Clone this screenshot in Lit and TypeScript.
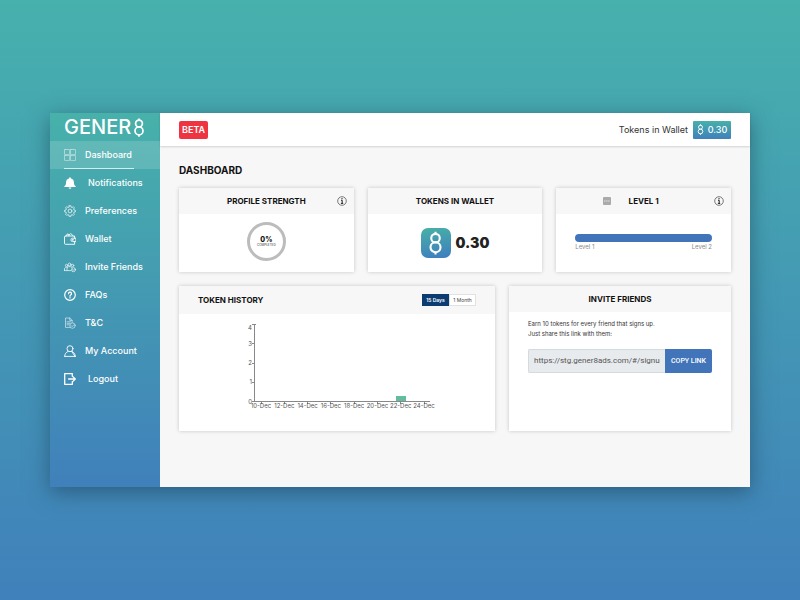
import { LitElement, html, svg, css } from "lit";
import { customElement, state } from "lit/decorators.js";
import { classMap } from "lit/directives/class-map.js";

const icons = {
  dashboard: svg`<g opacity=".65" stroke-width=".7"><rect x=".5" y=".5" width="5.2" height="5.2" rx=".5"/><rect x="6.400" y=".5" width="5.2" height="5.2" rx=".5"/><rect x=".5" y="6.400" width="5.2" height="5.2" rx=".5"/><rect x="6.400" y="6.400" width="5.2" height="5.2" rx=".5"/></g>`,
  bell: svg`<path fill="#fff" stroke="none" d="M6 .3c.5 0 .9.4.9.9v.3c1.900.4 3 1.800 3 3.500 0 2.600.6 3.500 1.800 4.300v.8H.3v-.8c1.200-.8 1.800-1.700 1.800-4.300 0-1.700 1.100-3.100 3-3.500v-.3c0-.5.400-.9.900-.9z M4.600 10.600h2.800a1.400 1.200 0 0 1-2.800 0z"/>`,
  gear: svg`<g stroke-width=".8" opacity=".9"><circle cx="6" cy="6" r="1.900"/><path d="M5.200.7h1.600l.3 1.400 1 .4 1.200-.8 1.100 1.100-.8 1.200.4 1 1.400.3v1.500l-1.400.3-.4 1 .8 1.200-1.100 1.100-1.200-.8-1 .4-.3 1.400H5.200l-.3-1.400-1-.4-1.200.8-1.100-1.100.8-1.200-.4-1L.6 6.800V5.300L2 5l.4-1-.8-1.200 1.100-1.100 1.200.8 1-.4z"/></g>`,
  wallet: svg`<path d="M1.500 3h9.100v2.200M10.600 8.600v2.700H1.500a1 1 0 0 1-1-1V4a1 1 0 0 1 1-1M2.600 2.800l.6-1.900 2.300.9M4.400 2.800L6.800.5l2.300 2.300M11.500 5.200H8.600a1.700 1.700 0 0 0 0 3.400h2.900z" stroke-width=".9"/><circle cx="8.700" cy="6.900" r=".4"/>`,
  friends: svg`<g stroke-width=".8" opacity=".85"><circle cx="2.600" cy="4.500" r="1.200"/><circle cx="5.600" cy="3.500" r="1.400"/><circle cx="8.600" cy="4.500" r="1.200"/><path d="M.5 9.500V8a2 2 0 0 1 2.700-1.800M3 9.600V8a2.600 2.600 0 0 1 4.600-1.600M.5 9.600h6.400"/><circle cx="9.500" cy="8.700" r="2"/><path d="M8.600 8.700l.7.700 1.200-1.300"/></g>`,
  faq: svg`<circle cx="6" cy="6" r="5.300" stroke-width="1.200"/><path d="M4.500 4.700a1.500 1.500 0 1 1 2.200 1.300c-.6.3-.7.600-.7 1.200M6 8.600v.3" stroke-width="1.300"/>`,
  terms: svg`<g stroke-width=".7" opacity=".8"><path d="M6 10.400H1.500V1h4.300l2.300 2.300v2M5.700 1v2.400h2.400M3 4.800h3.500M3 6.300h2.800M3 7.800h2.200"/><circle cx="8.500" cy="8.600" r="2.700"/><path d="M7.200 8.600l1 1 1.700-1.900"/></g>`,
  account: svg`<g stroke-width=".9"><circle cx="6" cy="3.700" r="3"/><path d="M.7 11.400c0-2.600 1.400-4.200 3.400-5M7.900 6.400c2 .8 3.400 2.400 3.400 5zM.7 11.400h10.600"/></g>`,
  logout: svg`<path d="M8.300 3.300V.7H.7v10.600h7.600V8.700M4.600 6h6.700M9.200 3.900L11.300 6 9.200 8.100" stroke-width="1.300"/>`,
};

const eight = svg`<circle cx="6" cy="5.600" r="3.400"/><circle cx="6" cy="12.900" r="4"/><path d="M6 .5v2M6 16.700v2"/>`;

const nav = [
  { id: "dashboard", label: "Dashboard", icon: icons.dashboard, wide: false },
  { id: "notifications", label: "Notifications", icon: icons.bell, wide: true },
  { id: "preferences", label: "Preferences", icon: icons.gear, wide: false },
  { id: "wallet", label: "Wallet", icon: icons.wallet, wide: false },
  { id: "invite", label: "Invite Friends", icon: icons.friends, wide: false },
  { id: "faqs", label: "FAQs", icon: icons.faq, wide: false },
  { id: "terms", label: "T&C", icon: icons.terms, wide: false },
  { id: "account", label: "My Account", icon: icons.account, wide: false },
  { id: "logout", label: "Logout", icon: icons.logout, wide: true },
];

const days = ["10-Dec", "12-Dec", "14-Dec", "16-Dec", "18-Dec", "20-Dec", "22-Dec", "24-Dec"];
const levels = [0, 1, 2, 3, 4];

@customElement("token-chart")
export class TokenChart extends LitElement {
  static styles = css`
    :host { display: block; }
    svg { display: block; overflow: visible; }
    .axis { fill: none; stroke: #888; stroke-width: 1; shape-rendering: crispEdges; }
    .bar { fill: #62bd9d; }
    text { font: 6px Inter, "Open Sans", sans-serif; fill: #555; }
    .day { text-anchor: middle; }
    .level { text-anchor: end; }
  `;

  render() {
    const x = (i: number) => 24 + (i * 163) / 7;
    const y = (v: number) => 87.5 - v * 19.250;
    return html`<svg width="200" height="100" viewBox="0 0 200 100" role="img" aria-label="Tokens per day">
      <rect class="bar" x="159" y="82" width="10" height="5"></rect>
      <path class="axis" d="M15 10.500H18.500M17.500 10.500V87.500H193"></path>
      ${levels.map((v) => svg`<path class="axis" d="M15 ${y(v)}h3"/><text class="level" x="15" y=${v === 4 ? 16 : y(v) + 2}>${v}</text>`)}
      ${days.map((d, i) => svg`<path class="axis" d="M${x(i)} 87v3"/><text class="day" x=${x(i)} y="94">${d}</text>`)}
    </svg>`;
  }
}

@customElement("app-root")
export class AppRoot extends LitElement {
  @state() private range = 15;

  static styles = css`
    :host {
      display: flex;
      box-sizing: border-box;
      min-height: 100vh;
      padding: 113px 50px;
      background: linear-gradient(#47b1ad, #4080bb);
      font: 9px/12px Inter, "Open Sans", sans-serif;
      color: #222;
    }
    * { box-sizing: border-box; }
    h1, h2, p { margin: 0; }
    button, input { font: inherit; }
    button { cursor: pointer; }
    svg { display: block; flex: none; }
    .window {
      flex: 1;
      display: flex;
      min-width: 0;
      background: #f7f7f7;
      box-shadow: 0 5px 20px rgba(20, 50, 70, 0.5);
    }
    .sidebar {
      flex: none;
      width: 110px;
      background: linear-gradient(#47b1aa, #4080bb);
      color: #fff;
    }
    .logo {
      display: flex;
      align-items: center;
      gap: 2px;
      height: 28px;
      padding: 0 14px;
      font-size: 20px;
      line-height: 28px;
      font-weight: 500;
      color: #fff;
      text-decoration: none;
    }
    .stroke { fill: none; stroke: #fff; stroke-width: 1; stroke-linecap: round; stroke-linejoin: round; }
    .mark { fill: none; stroke: #fff; stroke-width: 1.700; }
    .item {
      position: relative;
      display: flex;
      align-items: center;
      gap: 9px;
      height: 28px;
      padding: 0 14px;
      font-weight: 500;
      color: #fff;
      text-decoration: none;
      white-space: nowrap;
    }
    .item.wide { gap: 12px; }
    .item.active { background: rgba(255, 255, 255, 0.15); }
    .item.active::after {
      content: "";
      position: absolute;
      left: 14px;
      right: 26px;
      bottom: 0;
      height: 1px;
      background: rgba(255, 255, 255, 0.75);
    }
    .content { flex: 1; min-width: 0; }
    .topbar {
      display: flex;
      align-items: center;
      justify-content: space-between;
      height: 33px;
      padding: 0 19px;
      background: #fff;
      box-shadow: 0 1px 2px rgba(0, 0, 0, 0.15);
    }
    .beta {
      padding: 0 3px;
      border-radius: 2px;
      background: #ee3440;
      color: #fff;
      font-weight: 600;
      line-height: 18px;
    }
    .balance { display: flex; align-items: center; gap: 5px; color: #333; }
    .chip {
      display: flex;
      align-items: center;
      justify-content: center;
      gap: 4px;
      width: 38px;
      height: 18px;
      border-radius: 1px;
      background: linear-gradient(#47b1aa, #4080bb);
      color: #fff;
      font-weight: 500;
    }
    .page { padding: 18px 19px 0; }
    h1 { font-size: 10px; line-height: 12px; font-weight: 700; color: #111; }
    .row { display: grid; gap: 14px; }
    .stats { grid-template-columns: repeat(3, minmax(0, 1fr)); margin-top: 12px; }
    .details { grid-template-columns: minmax(0, 316fr) minmax(0, 222fr); margin-top: 14px; }
    .card {
      display: flex;
      flex-direction: column;
      min-height: 84px;
      background: #fff;
      box-shadow: 0 0 4px rgba(0, 0, 0, 0.2);
    }
    .details .card { min-height: 145px; }
    .head {
      display: grid;
      grid-template-columns: 1fr auto 1fr;
      align-items: center;
      height: 26px;
      padding: 0 7px;
      background: #f7f7f7;
    }
    .head.split { display: flex; justify-content: space-between; height: 28px; padding: 0 19px; }
    h2 { grid-column: 2; font-size: 8px; line-height: 12px; font-weight: 700; color: #111; }
    .info { justify-self: end; padding: 0; border: 0; background: none; }
    .badge { justify-self: end; margin-right: 18px; }
    .body { flex: 1; display: flex; align-items: center; justify-content: center; }
    .body.chart { align-items: flex-start; }
    .body.strength { padding-bottom: 4px; }
    .ring {
      display: flex;
      flex-direction: column;
      align-items: center;
      justify-content: center;
      width: 39px;
      height: 39px;
      border: 3px solid #bcbcbc;
      border-radius: 50%;
    }
    .percent { font-size: 7px; line-height: 7px; font-weight: 800; color: #111; }
    .done { font-size: 3px; line-height: 4px; color: #333; }
    .amount { gap: 5px; font-size: 14px; font-weight: 900; }
    .token {
      display: grid;
      place-items: center;
      width: 30px;
      height: 30px;
      border-radius: 7px;
      background: linear-gradient(170deg, #47b1a6, #3f7cc0);
    }
    .level { flex-direction: column; align-items: stretch; padding: 0 19px 2px; gap: 1px; }
    .track { height: 8px; border-radius: 4px; background: #4174b9; }
    .ends { display: flex; justify-content: space-between; font-size: 6px; line-height: 8px; color: #888; }
    .toggle { display: flex; }
    .toggle button {
      width: 27px;
      height: 12px;
      padding: 0;
      border: 1px solid #e2e2e2;
      background: #fff;
      color: #444;
      font-size: 5px;
      line-height: 10px;
    }
    .toggle button.on { border-color: #0d3c73; background: #0d3c73; color: #fff; font-weight: 600; }
    .invite { padding: 7px 19px; }
    .invite p { font-size: 6px; line-height: 10px; color: #333; }
    .share { display: flex; height: 24px; margin-top: 10px; }
    .share input {
      flex: 1;
      min-width: 0;
      padding: 0 5px;
      border: 1px solid #d5dade;
      border-right: 0;
      border-radius: 2px 0 0 2px;
      background: #e8ebee;
      color: #555;
      font-family: Roboto, Inter, sans-serif;
      font-size: 8px;
    }
    .share button {
      flex: none;
      width: 47px;
      padding: 0;
      border: 0;
      border-radius: 0 2px 2px 0;
      background: #4174b9;
      color: #fff;
      font-size: 7px;
      font-family: Roboto, Inter, sans-serif;
      font-weight: 500;
    }
  `;

  private info(label: string) {
    return html`<button class="info" aria-label=${label}>
      <svg width="10" height="10" viewBox="0 0 10 10"><circle cx="5" cy="5" r="4.300" fill="none" stroke="#444" stroke-width=".7"></circle><path d="M5 2v1.300M4 4.300h1.200v3M3.900 7.400h2.300" fill="none" stroke="#222" stroke-width="1"></path></svg>
    </button>`;
  }

  private toggle(range: number, label: string) {
    return html`<button class=${classMap({ on: this.range === range })} aria-pressed=${this.range === range} @click=${() => (this.range = range)}>${label}</button>`;
  }

  render() {
    return html`<div class="window">
      <nav class="sidebar">
        <a class="logo" href="#/">GENER<svg class="mark" width="12" height="19" viewBox="0 0 12 19" role="img" aria-label="8">${eight}</svg></a>
        ${nav.map((n) => html`<a href="#/${n.id}" class=${classMap({ item: true, wide: n.wide, active: n.id === "dashboard" })}>
          <svg class="stroke" width="12" height="12" viewBox="0 0 12 12" aria-hidden="true">${n.icon}</svg>${n.label}</a>`)}
      </nav>
      <div class="content">
        <header class="topbar">
          <span class="beta">BETA</span>
          <div class="balance">Tokens in Wallet
            <span class="chip"><svg class="mark" width="7" height="11" viewBox="0 0 12 19" aria-hidden="true">${eight}</svg>0.30</span>
          </div>
        </header>
        <main class="page">
          <h1>DASHBOARD</h1>
          <div class="row stats">
            <section class="card">
              <div class="head"><h2>PROFILE STRENGTH</h2>${this.info("About profile strength")}</div>
              <div class="body strength"><div class="ring"><span class="percent">0%</span><span class="done">COMPLETED</span></div></div>
            </section>
            <section class="card">
              <div class="head"><h2>TOKENS IN WALLET</h2></div>
              <div class="body amount"><span class="token"><svg class="mark" width="15" height="24" viewBox="0 0 12 19" aria-hidden="true">${eight}</svg></span>0.30</div>
            </section>
            <section class="card">
              <div class="head">
                <svg class="badge" width="8" height="8" viewBox="0 0 8 8" aria-hidden="true"><rect width="8" height="8" rx="1" fill="#aaa"></rect><path d="M1 4h6" stroke="#ddd" stroke-dasharray="1.500 .4"></path></svg>
                <h2>LEVEL 1</h2>${this.info("About levels")}
              </div>
              <div class="body level">
                <div class="track" role="progressbar" aria-label="Level progress" aria-valuenow="100"></div>
                <div class="ends"><span>Level 1</span><span>Level 2</span></div>
              </div>
            </section>
          </div>
          <div class="row details">
            <section class="card">
              <div class="head split"><h2>TOKEN HISTORY</h2>
                <div class="toggle">${this.toggle(15, "15 Days")}${this.toggle(30, "1 Month")}</div>
              </div>
              <div class="body chart"><token-chart></token-chart></div>
            </section>
            <section class="card">
              <div class="head"><h2>INVITE FRIENDS</h2></div>
              <div class="invite">
                <p>Earn 10 tokens for every friend that signs up.</p>
                <p>Just share this link with them:</p>
                <div class="share">
                  <input aria-label="Invite link" readonly value="https://stg.gener8ads.com/#/signup">
                  <button>COPY LINK</button>
                </div>
              </div>
            </section>
          </div>
        </main>
      </div>
    </div>`;
  }
}
